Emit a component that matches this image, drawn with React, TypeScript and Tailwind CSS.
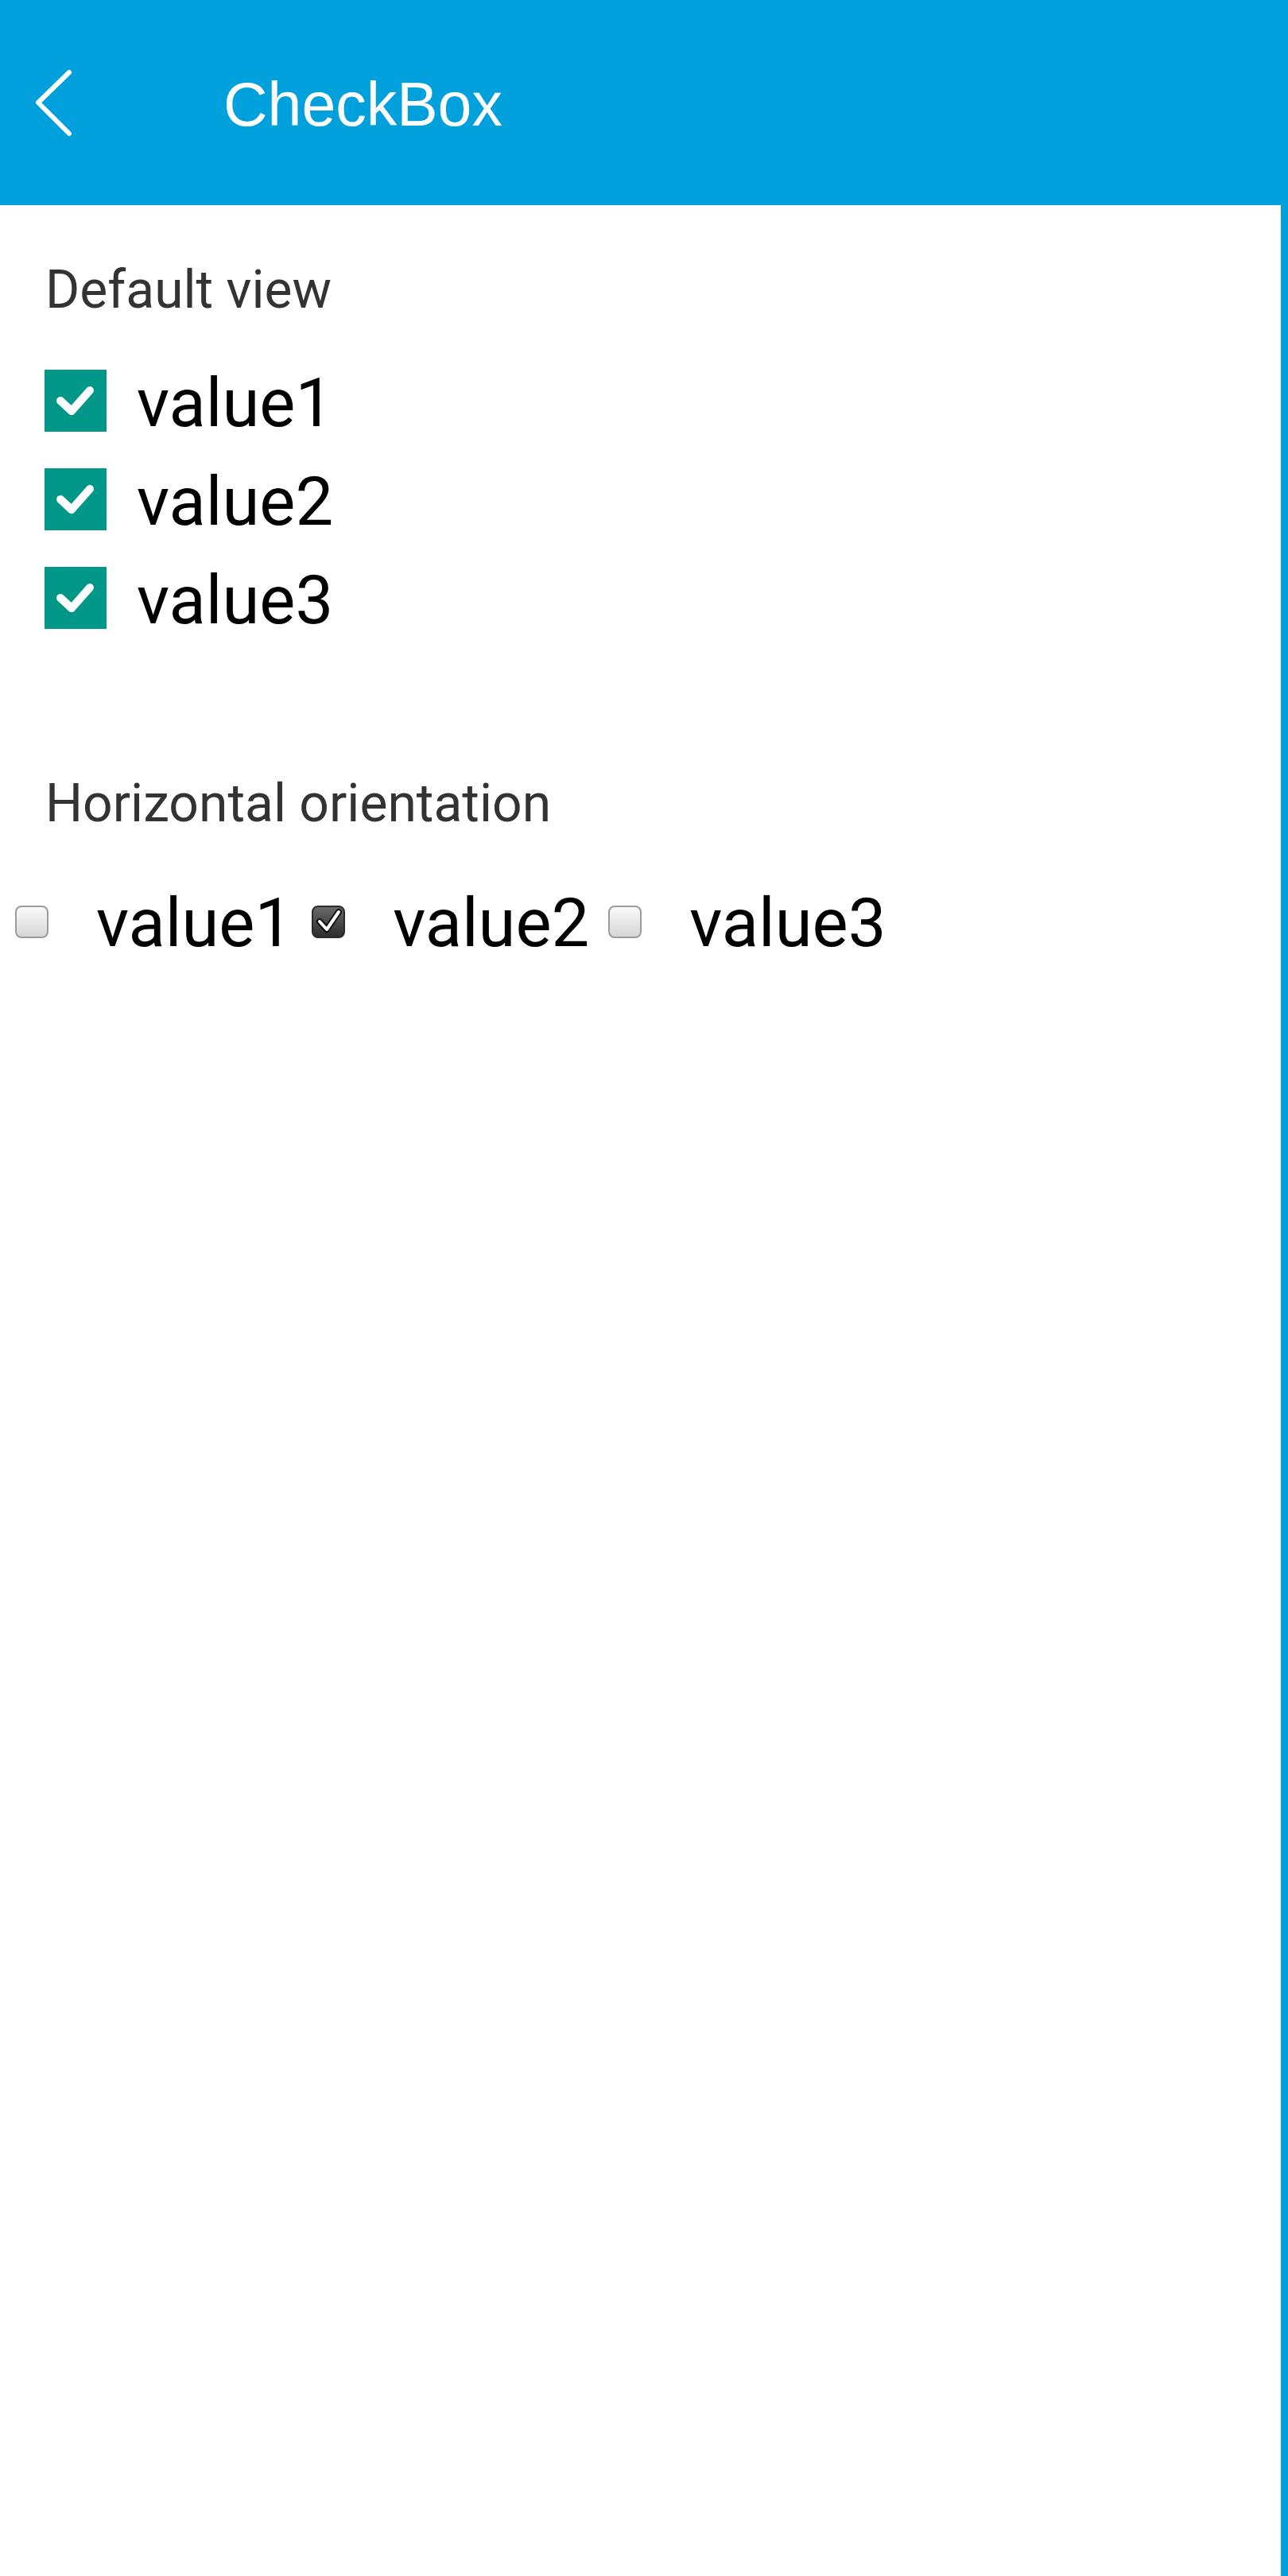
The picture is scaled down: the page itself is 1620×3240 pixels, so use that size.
import React from "react";

function TealCheck() {
  return (
    <div className="w-[78px] h-[78px] bg-[#009688] shrink-0">
      <svg width="78" height="78" viewBox="0 0 78 78">
        <polyline
          points="20,39 34,52 57,26"
          fill="none"
          stroke="#ffffff"
          strokeWidth="10"
          strokeLinecap="round"
          strokeLinejoin="round"
        />
      </svg>
    </div>
  );
}

function NativeBox({ checked }: { checked: boolean }) {
  if (checked) {
    return (
      <div className="w-[42px] h-[41px] shrink-0 rounded-[8px] border-2 border-[#2a2a2a] bg-gradient-to-b from-[#6a6a6a] to-[#2e2e2e] overflow-hidden">
        <svg width="38" height="37" viewBox="0 0 38 37">
          <polyline
            points="8,18 17,28 32,6"
            fill="none"
            stroke="#111111"
            strokeWidth="8"
            strokeLinecap="round"
            strokeLinejoin="round"
          />
          <polyline
            points="8,18 17,28 32,6"
            fill="none"
            stroke="#ffffff"
            strokeWidth="4"
            strokeLinecap="round"
            strokeLinejoin="round"
          />
        </svg>
      </div>
    );
  }
  return (
    <div className="w-[42px] h-[41px] shrink-0 rounded-[8px] border-2 border-[#9c9c9c] bg-gradient-to-b from-[#fafafa] to-[#d6d6d6]" />
  );
}

export default function App() {
  const rows = ["value1", "value2", "value3"];
  const horiz = [
    { label: "value1", checked: false },
    { label: "value2", checked: true },
    { label: "value3", checked: false },
  ];
  return (
    <div className="w-full h-[3240px] bg-[#00a0dc] flex flex-col">
      <header className="h-[258px] shrink-0 flex items-center bg-[#00a0dc]">
        <svg width="100" height="100" viewBox="0 0 100 100" className="shrink-0">
          <polyline
            points="87,12 48,50 87,89"
            fill="none"
            stroke="#ffffff"
            strokeWidth="6"
            strokeLinecap="round"
            strokeLinejoin="round"
          />
        </svg>
        <span className="ml-[181px] pt-[4px] text-white text-[77px] leading-[77px] font-['Liberation_Sans',Arial,sans-serif]">
          CheckBox
        </span>
      </header>
      <main className="flex-1 bg-white mr-[9px] flex flex-col font-['Roboto',sans-serif]">
        <div className="mt-[74px] pl-[57px] text-[66px] leading-[66px] text-[#333333]">
          Default view
        </div>
        <div className="mt-[44px] flex flex-col pl-[56px]">
          {rows.map((r) => (
            <div key={r} className="h-[124px] flex items-start">
              <div className="mt-[23px]">
                <TealCheck />
              </div>
              <span className="mt-[23px] ml-[38px] text-[85px] leading-[84px] text-black">
                {r}
              </span>
            </div>
          ))}
        </div>
        <div className="mt-[164px] pl-[57px] text-[66px] leading-[66px] text-[#333333]">
          Horizontal orientation
        </div>
        <div className="mt-[75px] flex items-start pl-[19px]">
          {horiz.map((h, i) => (
            <div key={h.label} className={"flex items-start " + (i > 0 ? "ml-[24px]" : "")}>
              <div className="mt-[20px]">
                <NativeBox checked={h.checked} />
              </div>
              <span className="ml-[60px] text-[85px] leading-[84px] text-black">
                {h.label}
              </span>
            </div>
          ))}
        </div>
      </main>
    </div>
  );
}
